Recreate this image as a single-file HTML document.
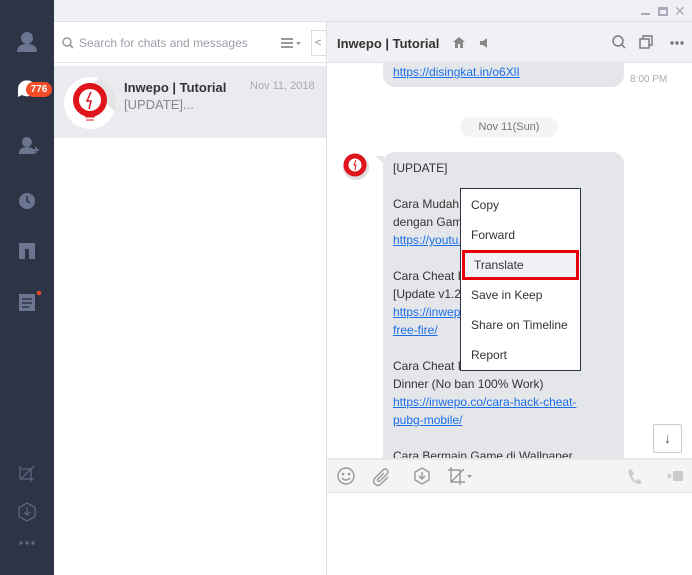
<!DOCTYPE html><html><head><style>
*{margin:0;padding:0;box-sizing:border-box}
body{width:692px;height:575px;position:relative;overflow:hidden;font-family:"Liberation Sans",sans-serif;font-size:12px;background:#fff}
.a{position:absolute}
a,a.t{color:#1a6ee8;text-decoration:underline}
.t{position:absolute;left:10px;white-space:nowrap;color:#333}
.m div{height:30px;line-height:30px;padding-left:10px;color:#333}
</style></head><body>
<div class="a" style="left:0;top:0;width:54px;height:575px;background:#2d3446"></div>
<div class="a" style="left:54px;top:0;width:638px;height:22px;background:#eef0f3;border-bottom:1px solid #dde0e4"></div>
<div class="a" style="left:641px;top:13px;width:9px;height:2px;background:#aab"></div>
<div class="a" style="left:658px;top:7px;width:10px;height:9px;border:2px solid #aab;border-width:3px 2px 2px"></div>
<div class="a" style="left:674px;top:3px;color:#aab;font-size:14px">✕</div>
<svg class="a" style="left:0;top:22px" width="54" height="540" fill="#6c7590">
<circle cx="27" cy="16" r="6"/><path d="M17 30q0-8 10-8t10 8z"/>
<path d="M18 66a9 8 0 1 1 4 7l-4 2z" fill="#fff"/>
<circle cx="27" cy="120" r="5"/><path d="M19 132q0-7 8-7t8 7z"/><path d="M33 128h6M36 125v6" stroke="#6c7590" stroke-width="1.6"/>
<circle cx="27" cy="179" r="8"/><path d="M27 174v5l3 2" stroke="#2d3446" stroke-width="1.5" fill="none"/>
<path d="M19 221h16v16h-6v-10h-4v10h-6z"/>
<rect x="19" y="272" width="16" height="17"/><path d="M22 277h10M22 281h10M22 285h7" stroke="#2d3446" stroke-width="1.4"/>
<circle cx="39" cy="271" r="2.2" fill="#f04c25"/>
<path d="M20 444v13h14M21 457l13-13M20 447h11v13" stroke="#5c6580" fill="none" stroke-width="1.3"/>
<path d="M27 481l8 4.5v9l-8 4.5-8-4.5v-9z M27 485v8M24 490l3 3 3-3" stroke="#5c6580" fill="none" stroke-width="1.3"/>
<circle cx="21" cy="521" r="1.8" fill="#5c6580"/><circle cx="27" cy="521" r="1.8" fill="#5c6580"/><circle cx="33" cy="521" r="1.8" fill="#5c6580"/>
</svg>
<div class="a" style="left:26px;top:82px;width:26px;height:15px;background:#f04c25;border-radius:8px;color:#fff;font-size:10px;font-weight:bold;text-align:center;line-height:15px">776</div>
<div class="a" style="left:54px;top:22px;width:272px;height:41px;background:#fff;border-bottom:1px solid #e3e5e8"></div>
<svg class="a" style="left:62px;top:37px" width="12" height="12"><circle cx="5" cy="5" r="4" stroke="#999" stroke-width="1.5" fill="none"/><path d="M8 8l3 3" stroke="#999" stroke-width="1.6"/></svg>
<div class="a" style="left:79px;top:36px;color:#9a9ea6;font-size:12px">Search for chats and messages</div>
<svg class="a" style="left:281px;top:38px" width="22" height="10" fill="#999"><rect width="12" height="2"/><rect y="4" width="12" height="2"/><rect y="8" width="12" height="2"/><path d="M15 4h5l-2.5 3z"/></svg>
<div class="a" style="left:311px;top:30px;width:16px;height:26px;border:1px solid #ddd;border-right:none;background:#fff;color:#888;font-size:11px;line-height:24px;padding-left:3px">&lt;</div>
<div class="a" style="left:54px;top:66px;width:272px;height:72px;background:#e9ebef"></div>
<div class="a" style="left:64px;top:77px;width:52px;height:52px;border-radius:50%;background:#fff;overflow:hidden"><div class="a" style="left:26px;top:10px;width:40px;height:50px;background:#e4e4e4;transform:rotate(-45deg);transform-origin:0 0"></div></div>
<svg class="a" style="left:64px;top:77px" width="52" height="52"><circle cx="26" cy="23" r="14" fill="#fff" stroke="#e0141b" stroke-width="6"/><path d="M27 15l-4 9h4l-2 8" stroke="#e0141b" stroke-width="1.5" fill="none"/><path d="M21 40h10M22 43h8" stroke="#e0141b" stroke-width="1"/></svg>
<div class="a" style="left:124px;top:80px;font-weight:bold;font-size:13px;color:#333">Inwepo | Tutorial</div>
<div class="a" style="left:124px;top:97px;font-size:13px;color:#888">[UPDATE]...</div>
<div class="a" style="left:250px;top:80px;font-size:11px;color:#aaa">Nov 11, 2018</div>
<div class="a" style="left:326px;top:22px;width:1px;height:553px;background:#dde0e4"></div>
<div class="a" style="left:327px;top:22px;width:365px;height:41px;background:#eff1f4;border-bottom:1px solid #dde0e4"></div>
<div class="a" style="left:337px;top:36px;font-weight:bold;font-size:13px;color:#333">Inwepo | Tutorial</div>
<svg class="a" style="left:452px;top:36px" width="40" height="14" fill="#888"><path d="M1 6l6-5 6 5h-2v6h-3v-4h-2v4h-3v-6z"/><path d="M28 5h3l4-3v10l-4-3h-3z"/></svg>
<svg class="a" style="left:610px;top:34px" width="80" height="16" fill="none" stroke="#777" stroke-width="1.4"><circle cx="8" cy="7" r="5"/><path d="M12 11l3 3"/><rect x="30" y="5" width="9" height="9"/><path d="M33 5v-3h9v9h-3"/><circle cx="62" cy="9" r="1" fill="#777"/><circle cx="67" cy="9" r="1" fill="#777"/><circle cx="72" cy="9" r="1" fill="#777"/></svg>
<div class="a" style="left:383px;top:63px;width:241px;height:24px;background:#e4e6ea;border-radius:0 0 12px 12px"><a class="t" style="top:2px;font-size:12px">https://disingkat.in/o6XlI</a></div>
<div class="a" style="left:630px;top:74px;font-size:10px;color:#aaa">8:00 PM</div>
<div class="a" style="left:460px;top:117px;width:98px;height:20px;background:#f3f4f6;border-radius:10px;text-align:center;line-height:20px;font-size:11px;color:#777">Nov 11(Sun)</div>
<svg class="a" style="left:340px;top:150px" width="36" height="36"><circle cx="16" cy="17" r="13" fill="#ddd"/><circle cx="15" cy="15" r="9" fill="#fff" stroke="#e0141b" stroke-width="5"/><path d="M16 10l-2 5h2l-1 5" stroke="#e0141b" stroke-width="1" fill="none"/></svg>
<div class="a" style="left:383px;top:152px;width:241px;height:306px;background:#e4e6ea;border-radius:12px 12px 0 0">
<div class="t" style="top:9px">[UPDATE]</div>
<div class="t" style="top:45px">Cara Mudah Install Aplikasi APP</div>
<div class="t" style="top:63px">dengan Game</div>
<a class="t" style="top:81px">https://youtu.be/</a>
<div class="t" style="top:117px">Cara Cheat Free Fire Terbaru!</div>
<div class="t" style="top:135px">[Update v1.2</div>
<a class="t" style="top:153px">https://inwepo.co/cara-cheat-</a>
<a class="t" style="top:171px">free-fire/</a>
<div class="t" style="top:207px">Cara Cheat PUBG Mobile Chicken</div>
<div class="t" style="top:225px">Dinner (No ban 100% Work)</div>
<a class="t" style="top:243px">https://inwepo.co/cara-hack-cheat-</a>
<a class="t" style="top:261px">pubg-mobile/</a>
<div class="t" style="top:297px">Cara Bermain Game di Wallpaper</div>
</div>
<div class="a" style="left:375px;top:156px;width:0;height:0;border-top:8px solid #e4e6ea;border-left:9px solid transparent"></div>
<div class="a" style="left:653px;top:424px;width:29px;height:29px;border:1px solid #ccc;border-radius:2px;background:#fff;text-align:center;line-height:27px;color:#555;font-size:14px">↓</div>
<div class="a m" style="left:460px;top:188px;width:121px;height:183px;background:#fff;border:1px solid #2d3446;padding-top:1px">
<div>Copy</div><div>Forward</div><div style="background:#eff1f4;border:3px solid #e8000b;line-height:24px;padding-left:9px;margin:0 1px">Translate</div><div>Save in Keep</div><div>Share on Timeline</div><div>Report</div>
</div>
<div class="a" style="left:327px;top:458px;width:365px;height:35px;background:#f4f4f5;border-top:2px solid #e6e7e9;border-bottom:1px solid #e2e3e5"></div>
<svg class="a" style="left:336px;top:465px" width="356" height="22" fill="none" stroke="#999" stroke-width="1.4"><circle cx="10" cy="11" r="8"/><circle cx="7" cy="9" r=".6" fill="#999"/><circle cx="13" cy="9" r=".6" fill="#999"/><path d="M6 13q4 4 8 0"/><path d="M52 12l-7 7q-3 3-6 0t0-6l8-8q2-2 4 0t0 4l-7 7q-1 1-2 0t0-2l6-6"/><path d="M86 3l7 4v8l-7 4-7-4v-8z"/><path d="M86 7v7M83 11l3 3 3-3"/><path d="M115 2v15h14M112 5h12v15M115 17l13-13"/><path d="M131 10h5l-2.5 3z" fill="#999" stroke="none"/><path d="M294 4q-3 2 0 8t9 7q3 0 2-3l-3-2-2 2q-3-2-4-5l2-2-2-4z" fill="#ccc" stroke="none"/><path d="M332 8l4 3-4 3z M337 6h10v10h-10z" fill="#ccc" stroke="none"/></svg>
</body></html>
